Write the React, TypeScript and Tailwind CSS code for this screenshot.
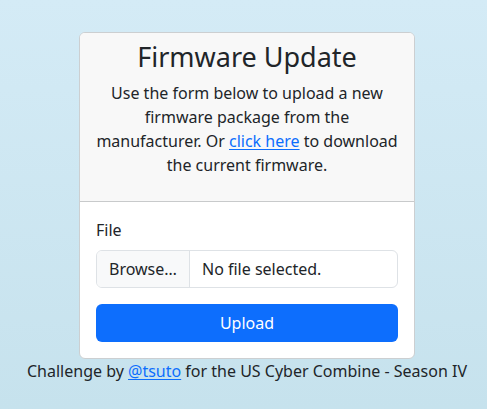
import { useState } from "react";

function FileField() {
  const [fileName, setFileName] = useState("");

  return (
    <div className="mb-4">
      <label htmlFor="firmware-file" className="mb-2 block">
        File
      </label>
      <div className="relative flex h-[38px] overflow-hidden rounded-md border border-[#dee2e6] bg-white focus-within:ring-4 focus-within:ring-[#0d6efd]/25">
        <span className="flex items-center border-r border-[#dee2e6] bg-[#f8f9fa] px-3">
          Browse…
        </span>
        <span className="flex min-w-0 items-center truncate px-3">
          {fileName || "No file selected."}
        </span>
        {/* The native control covers the styled field and takes its clicks. */}
        <input
          id="firmware-file"
          name="file"
          type="file"
          className="absolute inset-0 h-full w-full cursor-pointer opacity-0"
          onChange={(event) => setFileName(event.target.files?.[0]?.name ?? "")}
        />
      </div>
    </div>
  );
}

export default function App() {
  return (
    <main className="min-h-screen bg-linear-to-b from-[#d4ebf6] to-[#c6e2ed] pt-8 pl-[7px] font-['Noto_Sans','Liberation_Sans',sans-serif] text-base text-[#212529]">
      <section className="mx-auto w-full max-w-[336px] overflow-hidden rounded-md border border-[#cccfd1] bg-white">
        <header className="border-b border-[#c8cacb] bg-[#f8f8f8] px-4 py-2 text-center">
          <h1 className="mb-2 text-[27px] leading-8">Firmware Update</h1>
          <p className="mb-4">
            Use the form below to upload a new firmware package from the
            manufacturer. Or{" "}
            <a href="#firmware" className="text-[#0d6efd] underline underline-offset-2">
              click here
            </a>{" "}
            to download the current firmware.
          </p>
        </header>
        <form className="p-4" onSubmit={(event) => event.preventDefault()}>
          <FileField />
          <button
            type="submit"
            className="h-[38px] w-full cursor-pointer rounded-md bg-[#0d6efd] text-white"
          >
            Upload
          </button>
        </form>
      </section>
      <footer className="text-center">
        Challenge by{" "}
        <a href="#tsuto" className="text-[#0d6efd] underline underline-offset-2">
          @tsuto
        </a>{" "}
        for the US Cyber Combine - Season IV
      </footer>
    </main>
  );
}
